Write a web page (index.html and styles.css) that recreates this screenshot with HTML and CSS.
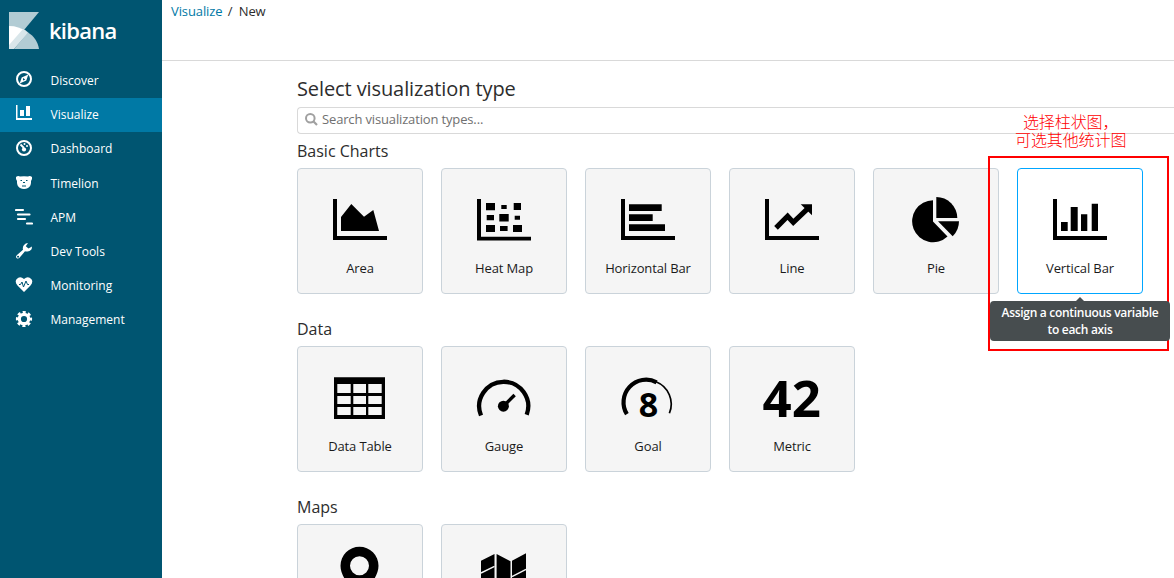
FILE: index.html
```html
<!DOCTYPE html>
<html lang="en">
  <head>
    <meta charset="UTF-8" />
    <meta name="viewport" content="width=device-width, initial-scale=1.0" />
    <title>Kibana</title>
    <link rel="stylesheet" href="styles.css">
  </head>
  <body>
    <nav class="sidebar">
      <div class="logo">
        <svg class="logo-mark" width="30" height="37" viewBox="0 0 30 37">
          <path d="M0 0H30L0 36Z" fill="#b2ccd4" />
          <path d="M0 14C7 14 12 16 17 19L2 37H0Z" fill="#fff" />
          <path d="M14 17C16 18 18 19 19.500 21L5 37H0V33Z" fill="#d9e6ea" />
          <path d="M19 20.500C25 24 29 30 30 37H5Z" fill="#b2ccd4" />
        </svg>
        <span class="logo-text">kibana</span>
      </div>
      <a class="nav-item">
        <svg class="nav-icon" viewBox="0 1 18 18">
          <circle cx="9" cy="9" r="7" fill="none" stroke="#fff" stroke-width="2" />
          <path fill-rule="evenodd" d="M13.3 4.5L11.3 10.6 4.7 13.5 6.7 7.4ZM8 8.1V10.5L10.3 9.5Z" fill="#fff" />
        </svg>
        <span>Discover</span>
      </a>
      <a class="nav-item active">
        <svg class="nav-icon" viewBox="0 1 18 18">
          <path d="M1 1H2.500V14H17V16H1ZM5 6H9V12H5ZM11 2H15V12H11Z" fill="#fff" />
        </svg>
        <span>Visualize</span>
      </a>
      <a class="nav-item">
        <svg class="nav-icon" viewBox="0 0 18 18">
          <circle cx="9" cy="9" r="7" fill="none" stroke="#fff" stroke-width="2" />
          <path d="M5.500 5.500L9 9" stroke="#fff" stroke-width="1.800" />
          <circle cx="9" cy="10.500" r="2.100" fill="#fff" />
          <circle cx="9.500" cy="5" r="1" fill="#fff" />
          <circle cx="12" cy="7" r="1" fill="#fff" />
        </svg>
        <span>Dashboard</span>
      </a>
      <a class="nav-item">
        <svg class="nav-icon" viewBox="0 -1 18 18">
          <path d="M1 2Q3 0.500 5 1.500Q9 1 13 1.500Q15 0.500 17 2Q17.500 4 16 6Q16.500 11 13 13Q9 14.800 5 13Q1.500 11 2 6Q0.500 4 1 2Z" fill="#fff" />
          <path d="M5.500 5.500H7M11 5.500H12.500M8 7.500H10M7 11H11" stroke="#005571" stroke-width="1" />
        </svg>
        <span>Timelion</span>
      </a>
      <a class="nav-item">
        <svg class="nav-icon" viewBox="0 0 18 18">
          <path d="M1 2H8M3 6.500H14.500M3 11H10M12 15.500H17" stroke="#fff" stroke-width="2.200" stroke-linecap="round" />
        </svg>
        <span>APM</span>
      </a>
      <a class="nav-item">
        <svg class="nav-icon" viewBox="0 0 18 18">
          <path fill-rule="evenodd" d="M13 1L10.800 4.200 13.500 6.500 17 4.500Q17 9 12.500 9.500Q11 9.700 10 9.300L4.500 15.800Q3 17.300 1.500 16Q0.300 14.500 2 13L8 7.800Q7.300 5 9 3Q10.500 1 13 1ZM3 13.800A0.900 0.900 0 1 0 3.100 13.800Z" fill="#fff" />
        </svg>
        <span>Dev Tools</span>
      </a>
      <a class="nav-item">
        <svg class="nav-icon" viewBox="0 0 18 18">
          <path d="M9 16L2.500 9.500Q-0.500 6 1.500 3.200Q5 -0.500 9 3Q13 -0.500 16.500 3.200Q18.500 6 15.500 9.500Z" fill="#fff" />
          <path d="M4 8.500H5.500L7 6 8.500 11 11 5 12.500 8.500H14" fill="none" stroke="#005571" stroke-width="1" />
        </svg>
        <span>Monitoring</span>
      </a>
      <a class="nav-item">
        <svg class="nav-icon" viewBox="0 0 18 18">
          <circle cx="9" cy="9" r="4.700" fill="none" stroke="#fff" stroke-width="3.200" />
          <circle cx="9" cy="9" r="6.800" fill="none" stroke="#fff" stroke-width="2.600" stroke-dasharray="3 2.341" stroke-dashoffset="1.500" />
        </svg>
        <span>Management</span>
      </a>
    </nav>

    <main class="content">
      <header class="topbar">
        <a class="crumb-link">Visualize</a>
        <span class="crumb-sep">/</span>
        <span>New</span>
      </header>

      <div class="wizard">
        <h1 class="title">Select visualization type</h1>
        <div class="search">
          <svg class="search-icon" width="13" height="13" viewBox="0 0 13 13">
            <circle cx="5.300" cy="5.300" r="4.300" fill="none" stroke="#a0a0a0" stroke-width="2" />
            <path d="M8.300 8.300L12 12" stroke="#a0a0a0" stroke-width="2.200" />
          </svg>
          <span>Search visualization types...</span>
        </div>

        <h2 class="group-title">Basic Charts</h2>
        <div class="cards">
          <div class="card">
            <svg class="card-icon" viewBox="0 0 60 60">
              <path d="M3 9H7V46H57V50H3Z" />
              <path d="M11 27L21.300 14 34 26.700 43.300 20 49 41H11Z" />
            </svg>
            <span>Area</span>
          </div>
          <div class="card">
            <svg class="card-icon" viewBox="0 0 60 60">
              <path d="M3 9H7V46.700H57V50.600H3Z" />
              <path d="M12 13h9v7.300h-9zM27.300 15h5.400v4h-5.400zM39.700 13h7.300v7h-7.300zM12.700 25h7.300v5.300h-7.300zM25.300 24h9.400v7.600h-9.400zM40.700 25.700h5.300v4h-5.300zM12 35h9v7h-9zM26 36h7.600v5h-7.600zM39 35h9v7h-9z" />
            </svg>
            <span>Heat Map</span>
          </div>
          <div class="card">
            <svg class="card-icon" viewBox="0 0 60 60">
              <path d="M3 9H7V46H57V50H3Z" />
              <path d="M11 14.200H43.700V21H11ZM11 24.200H34.700V31H11ZM11 34.300H47V41H11Z" />
            </svg>
            <span>Horizontal Bar</span>
          </div>
          <div class="card">
            <svg class="card-icon" viewBox="0 0 60 60">
              <path d="M3 9H7V46H57V50H3Z" />
              <path d="M14 37.800L25.600 26.200 31.300 32.400 46 18.300" fill="none" stroke="#000" stroke-width="5.200" />
              <path d="M38.700 14.300H50V25.300Z" />
            </svg>
            <span>Line</span>
          </div>
          <div class="card">
            <svg class="card-icon" viewBox="0 0 60 60">
              <path d="M27 10.300A21 21 0 1 0 41.500 46.600L27 31.500Z" />
              <path d="M30.300 7A21 21 0 0 1 51.300 28H30.300Z" />
              <path d="M32 31.300H53A21 21 0 0 1 46.700 46.300Z" />
            </svg>
            <span>Pie</span>
          </div>
          <div class="card selected">
            <svg class="card-icon" viewBox="0 0 60 60">
              <path d="M3 9H7V46H57V50H3Z" />
              <path d="M11 32H17.700V41H11ZM20.700 17H27.700V41H20.700ZM31 24.200H37.300V41H31ZM41.700 13.700H48V41H41.700Z" />
            </svg>
            <span>Vertical Bar</span>
            <div class="tooltip">Assign a continuous variable to each axis</div>
            <div class="mark-box"></div>
            <div class="mark-note">选择柱状图，<br />可选其他统计图</div>
          </div>
        </div>

        <h2 class="group-title">Data</h2>
        <div class="cards">
          <div class="card">
            <svg class="card-icon" viewBox="0 0 60 60">
              <path fill-rule="evenodd" d="M4 9.200H55V51H4ZM7.300 16V25H20.700V16ZM23.300 16V25H36V16ZM38.300 16V25H51.700V16ZM7.300 28V36H20.700V28ZM23.300 28V36H36V28ZM38.300 28V36H51.700V28ZM7.300 39V47H20.700V39ZM23.300 39V47H36V39ZM38.300 39V47H51.700V39Z" />
            </svg>
            <span>Data Table</span>
          </div>
          <div class="card">
            <svg class="card-icon" viewBox="0 0 60 60">
              <path d="M7 47.500A24.500 24.500 0 1 1 52.700 46.700" fill="none" stroke="#000" stroke-width="4.300" />
              <circle cx="29.400" cy="38.200" r="5.500" />
              <path d="M29.400 38.200L40.600 27" stroke="#000" stroke-width="3.400" />
            </svg>
            <span>Gauge</span>
          </div>
          <div class="card">
            <svg class="card-icon" viewBox="0 0 60 60">
              <path d="M8.900 46.200A22.600 22.600 0 0 1 38.600 14.300" fill="none" stroke="#000" stroke-width="4.200" />
              <path d="M38 13.800A24 24 0 0 1 51.400 45.300" fill="none" stroke="#000" stroke-width="1.700" />
              <text x="30.500" y="49.300" class="goal-digit">8</text>
            </svg>
            <span>Goal</span>
          </div>
          <div class="card">
            <svg class="card-icon" viewBox="0 0 60 60">
              <text x="29.700" y="48.700" class="metric-digits">42</text>
            </svg>
            <span>Metric</span>
          </div>
        </div>

        <h2 class="group-title">Maps</h2>
        <div class="cards">
          <div class="card">
            <svg class="card-icon" viewBox="0 0 60 60">
              <path fill-rule="evenodd" d="M29.500 0.800A19 19 0 0 1 48.500 19.800C48.500 33 34 44 29.500 58C25 44 10.500 33 10.500 19.800A19 19 0 0 1 29.500 0.800ZM29.500 10.300A9.500 9.500 0 1 0 29.500 29.300A9.500 9.500 0 1 0 29.500 10.300Z" />
            </svg>
          </div>
          <div class="card">
            <svg class="card-icon" viewBox="0 0 60 60">
              <path d="M7 14.700L20.500 8V46L7 52ZM22.600 8L36.500 15.300V53L22.600 46ZM38 14.700L52 7.200V45L38 53Z" />
              <path d="M7 27L20.500 20.300M38 30.700L52 23.300" stroke="#f5f5f5" stroke-width="1.400" />
            </svg>
          </div>
        </div>
      </div>
    </main>
  </body>
</html>
```
FILE: styles.css
```css
body {
  margin: 0;
  height: 578px;
  display: flex;
  overflow: hidden;
  font-family: "Open Sans", sans-serif;
  font-size: 13px;
  color: #2d2d2d;
  background: #fff;
}
.sidebar {
  width: 162px;
  flex-shrink: 0;
  background: #005571;
  color: #fff;
}
.logo {
  height: 52px;
  padding: 12px 0 0 9px;
  display: flex;
}
.logo-mark {
  margin-right: 10px;
}
.logo-text {
  font-size: 22px;
  line-height: 36px;
  font-weight: 600;
  letter-spacing: -0.750px;
}
.nav-item {
  display: flex;
  height: 34.200px;
  line-height: 34px;
  font-size: 12px;
  color: #fff;
}
.nav-icon {
  width: 18px;
  height: 18px;
  margin: 7px 17.500px 0 15px;
}
.active {
  background: #0079a5;
}
.content {
  flex: 1;
  min-width: 0;
}
.topbar {
  height: 60px;
  padding-left: 9px;
  line-height: 22px;
  letter-spacing: -0.100px;
  border-bottom: 1px solid #d9d9d9;
}
.crumb-link {
  color: #0079a5;
}
.crumb-sep {
  margin: 0 3px 0 2px;
}
.wizard {
  padding: 14px 0 0 135px;
}
.title {
  margin: 0 0 4px;
  font-size: 20px;
  line-height: 28px;
  font-weight: 400;
  letter-spacing: -0.100px;
}
.search {
  display: flex;
  height: 25px;
  line-height: 23px;
  border: 1px solid #d9d9d9;
  border-right: none;
  border-radius: 4px 0 0 4px;
  color: #707070;
  letter-spacing: -0.150px;
}
.search-icon {
  margin: 5px 4px 0 7px;
}
.group-title {
  margin: 0;
  height: 34px;
  line-height: 34px;
  font-size: 16px;
  font-weight: 400;
}
.cards {
  display: flex;
  gap: 18px;
  margin-bottom: 18px;
}
.card {
  position: relative;
  box-sizing: border-box;
  width: 126px;
  height: 126px;
  flex-shrink: 0;
  padding-top: 21px;
  display: flex;
  flex-direction: column;
  align-items: center;
  border: 1px solid #cad3da;
  border-radius: 4px;
  background: #f5f5f5;
  color: #1a1a1a;
  line-height: 36px;
  letter-spacing: -0.120px;
}
.card-icon {
  width: 60px;
  height: 60px;
  flex-shrink: 0;
  letter-spacing: 0;
}
.selected {
  border-color: #00a6ff;
  background: #fff;
}
.goal-digit {
  font-size: 34px;
  font-weight: 700;
  text-anchor: middle;
}
.metric-digits {
  font-size: 51px;
  font-weight: 700;
  text-anchor: middle;
}
.tooltip {
  position: absolute;
  z-index: 2;
  top: 132px;
  left: -28px;
  box-sizing: border-box;
  width: 180px;
  height: 40px;
  padding: 3px 8px;
  border-radius: 4px;
  background: #474d4f;
  color: #fff;
  font-size: 12px;
  font-weight: 600;
  line-height: 17px;
  letter-spacing: -0.300px;
  text-align: center;
}
.tooltip::before {
  content: "";
  position: absolute;
  top: -4px;
  left: 86px;
  border: 4px solid transparent;
  border-top: none;
  border-bottom-color: #474d4f;
}
.mark-box {
  position: absolute;
  top: -13px;
  left: -30px;
  width: 177px;
  height: 191px;
  border: 2px solid #f00;
}
.mark-note {
  position: absolute;
  top: -57px;
  left: -3px;
  color: #f00;
  font-family: "Noto Sans CJK SC", sans-serif;
  font-size: 16px;
  font-weight: 300;
  line-height: 18px;
  letter-spacing: -0.100px;
  text-align: center;
  white-space: nowrap;
}
```
